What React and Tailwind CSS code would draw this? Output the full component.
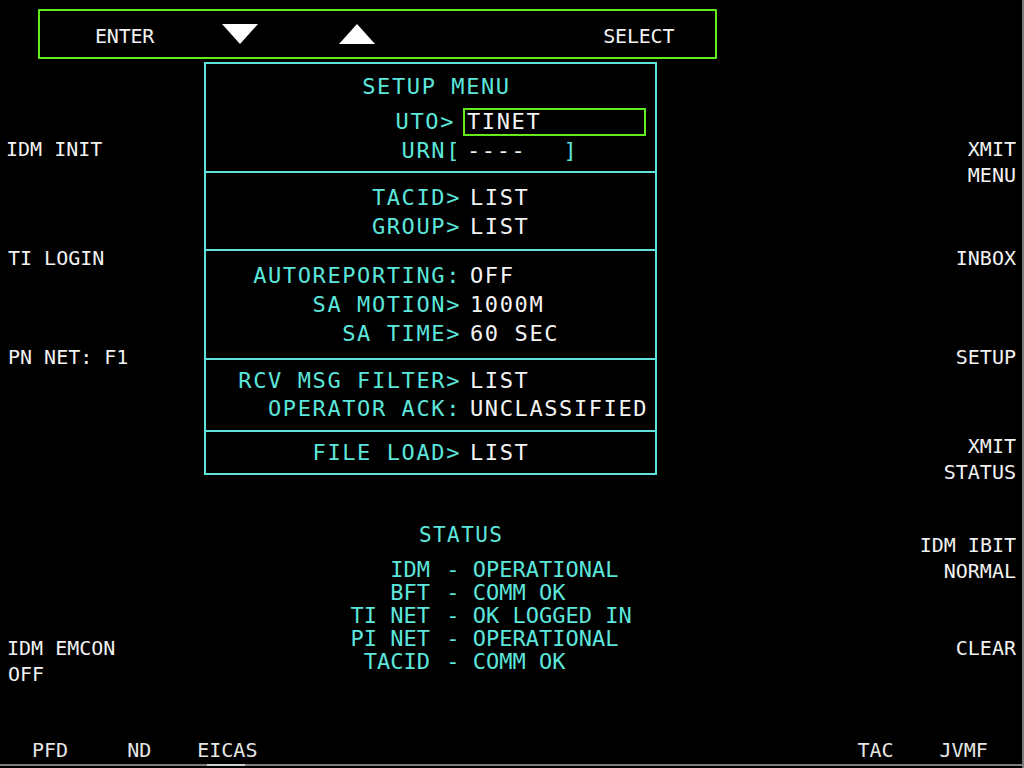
import React from "react";

function MenuRow({ label, value }) {
  return (
    <div className="flex leading-[29px]">
      <span className="w-[255px] shrink-0 text-right whitespace-pre text-[#5ce6dc]">{label}</span>
      <span className="ml-[9px] whitespace-pre text-[#f4f4f4]">{value}</span>
    </div>
  );
}

function StatusRow({ label, value }) {
  return (
    <div className="flex leading-[23px] text-[#5ce6dc]">
      <span className="w-[226px] shrink-0 text-right whitespace-pre">{label}</span>
      <span className="whitespace-pre ml-[3px]">{" - " + value}</span>
    </div>
  );
}

export default function App() {
  return (
    <div className="w-[1024px] h-[768px] bg-black flex flex-col overflow-hidden font-['DejaVu_Sans_Mono',monospace] border-r-2 border-[#7c7c7c]">
      {/* Top bar */}
      <div className="mt-[9px] ml-[38px] w-[679px] h-[50px] shrink-0 border-2 border-[#62ec1e] rounded-[1px] flex items-center text-[20px] tracking-[-0.2px] text-[#f2f2f2]">
        <span className="ml-[55px] pt-[4px] leading-[24px]">ENTER</span>
        <svg className="ml-[68px]" width="36" height="20" viewBox="0 0 36 20">
          <polygon points="0,0 36,0 18,20" fill="#ffffff" />
        </svg>
        <svg className="ml-[81px]" width="36" height="20" viewBox="0 0 36 20">
          <polygon points="18,0 36,20 0,20" fill="#ffffff" />
        </svg>
        <span className="ml-[228px] pt-[4px] leading-[24px]">SELECT</span>
      </div>

      {/* Body */}
      <div className="mt-[3px] flex h-[670px] shrink-0">
        {/* Left soft keys */}
        <div className="w-[204px] shrink-0 flex flex-col pl-[6px] text-[20px] leading-[26px] text-[#f2f2f2]">
          <span className="mt-[74px]">IDM INIT</span>
          <span className="mt-[83px] pl-[2px]">TI LOGIN</span>
          <span className="mt-[73px] pl-[2px]">PN NET: F1</span>
          <span className="mt-[265px] pl-[1px]">IDM EMCON</span>
          <span className="pl-[2px]">OFF</span>
        </div>

        {/* Center */}
        <div className="w-[453px] shrink-0 flex flex-col">
          <div className="h-[413px] border-2 border-[#5ee3dc] flex flex-col text-[22px] tracking-[1.6px]">
            <div className="h-[107px] pt-[8px] flex flex-col">
              <div className="leading-[29px] text-center pl-[12px] text-[#5ce6dc]">SETUP MENU</div>
              <div className="mt-[7px] flex h-[28px]">
                <span className="w-[249px] shrink-0 text-right leading-[28px] text-[#5ce6dc]">UTO&gt;</span>
                <div className="ml-[8px] w-[183px] h-[28px] border-2 border-[#62ec1e] pl-[2px] leading-[24px] text-[#f4f4f4]">TINET</div>
              </div>
              <div className="flex leading-[29px]">
                <span className="w-[255px] shrink-0 text-right text-[#5ce6dc]">URN[</span>
                <span className="ml-[6px] text-[#f4f4f4]">----</span>
                <span className="ml-[37px] text-[#5ce6dc]">]</span>
              </div>
            </div>
            <div className="h-[78px] border-t-2 border-[#5ee3dc] pt-[10px]">
              <MenuRow label="TACID>" value="LIST" />
              <MenuRow label="GROUP>" value="LIST" />
            </div>
            <div className="h-[109px] border-t-2 border-[#5ee3dc] pt-[10px]">
              <MenuRow label="AUTOREPORTING:" value="OFF" />
              <MenuRow label="SA MOTION>" value="1000M" />
              <MenuRow label="SA TIME>" value="60 SEC" />
            </div>
            <div className="h-[72px] border-t-2 border-[#5ee3dc] pt-[7px] flex flex-col">
              <div className="flex leading-[28px]">
                <span className="w-[255px] shrink-0 text-right text-[#5ce6dc]">RCV MSG FILTER&gt;</span>
                <span className="ml-[9px] text-[#f4f4f4]">LIST</span>
              </div>
              <div className="flex leading-[28px]">
                <span className="w-[255px] shrink-0 text-right text-[#5ce6dc]">OPERATOR ACK:</span>
                <span className="ml-[9px] text-[#f4f4f4]">UNCLASSIFIED</span>
              </div>
            </div>
            <div className="h-[43px] border-t-2 border-[#5ee3dc] pt-[6px]">
              <MenuRow label="FILE LOAD>" value="LIST" />
            </div>
          </div>

          <div className="mt-[48px] pl-[215px] text-[21px] tracking-[1.4px] leading-[24px] text-[#5ce6dc]">STATUS</div>
          <div className="mt-[11px] flex flex-col text-[22px]">
            <StatusRow label="IDM" value="OPERATIONAL" />
            <StatusRow label="BFT" value="COMM OK" />
            <StatusRow label="TI NET" value="OK LOGGED IN" />
            <StatusRow label="PI NET" value="OPERATIONAL" />
            <StatusRow label="TACID" value="COMM OK" />
          </div>
        </div>

        {/* Right soft keys */}
        <div className="flex-1 flex flex-col items-end pr-[6px] text-right text-[20px] leading-[26px] text-[#f2f2f2]">
          <span className="mt-[74px]">XMIT</span>
          <span>MENU</span>
          <span className="mt-[57px]">INBOX</span>
          <span className="mt-[73px]">SETUP</span>
          <span className="mt-[63px]">XMIT</span>
          <span>STATUS</span>
          <span className="mt-[47px]">IDM IBIT</span>
          <span>NORMAL</span>
          <span className="mt-[51px]">CLEAR</span>
        </div>
      </div>

      {/* Bottom row */}
      <div className="h-[36px] shrink-0 flex flex-col">
        <div className="pt-[5px] flex leading-[26px] text-[20px] text-[#e6e6e6]">
          <span className="ml-[32px]">PFD</span>
          <span className="ml-[59px]">ND</span>
          <span className="ml-[46px]">EICAS</span>
          <span className="ml-[600px]">TAC</span>
          <span className="ml-[46px]">JVMF</span>
        </div>
        <div className="mt-[1px] h-[2px] flex">
          <div className="w-[207px] bg-[#7c7c7c]" />
          <div className="w-[38px] bg-[#c8d4d4]" />
          <div className="flex-1 bg-[#7c7c7c]" />
        </div>
      </div>
    </div>
  );
}
